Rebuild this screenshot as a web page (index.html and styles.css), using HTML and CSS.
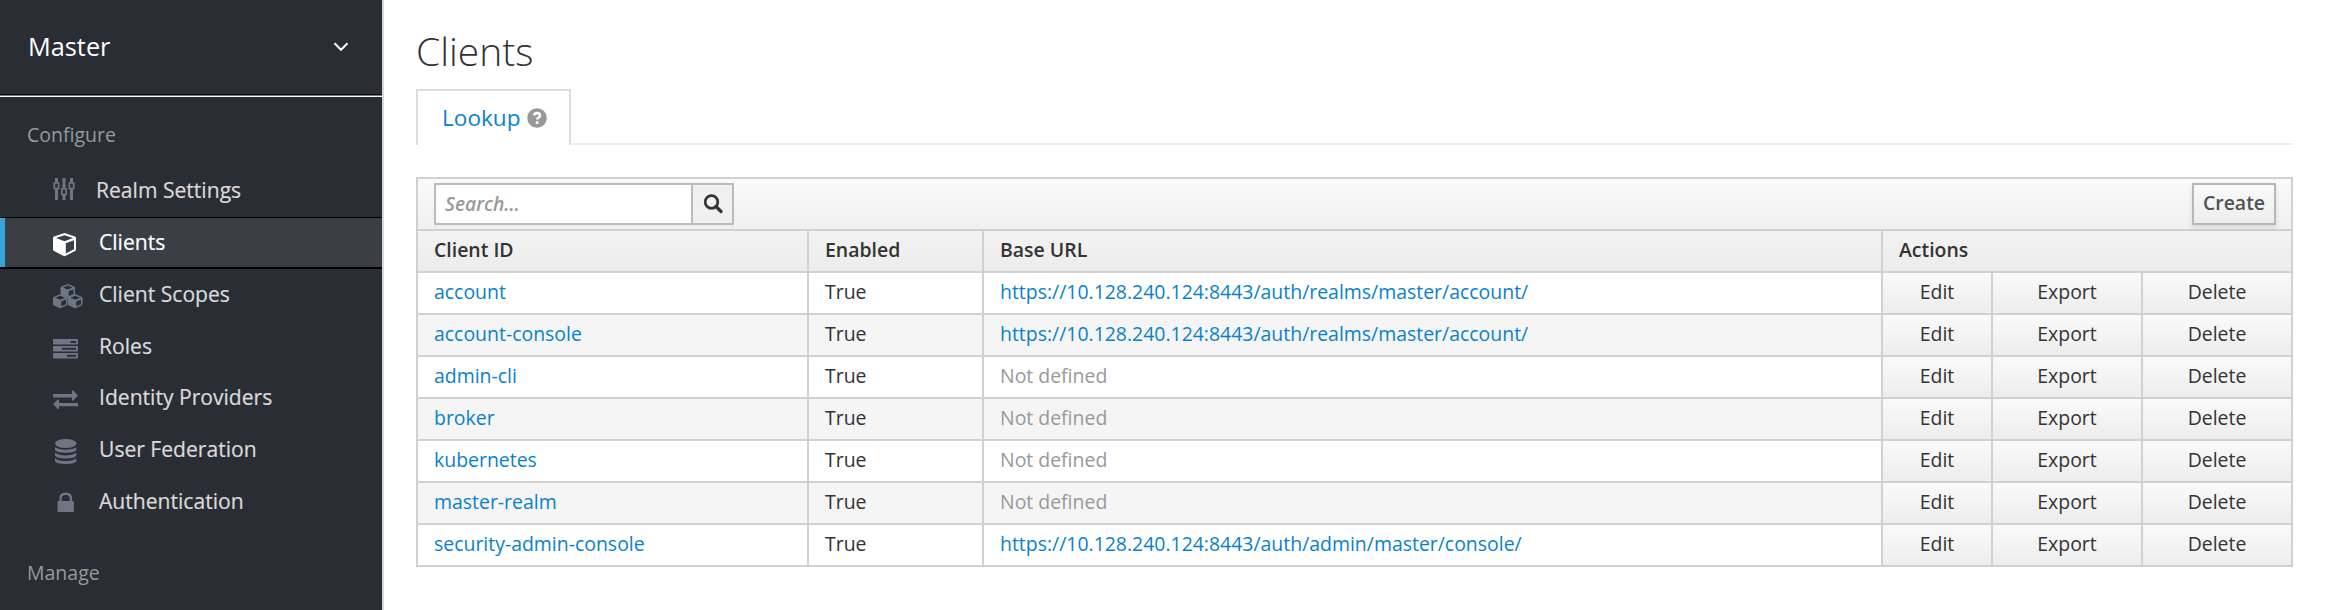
FILE: index.html
```html
<!DOCTYPE html>
<html lang="en">
<head>
<meta charset="utf-8">
<title>Clients</title>
<link rel="stylesheet" href="styles.css">
</head>
<body>
<div class="app">
  <nav class="sidebar">
    <div class="realm"><span>Master</span>
      <svg class="chevron" width="16" height="10" viewBox="0 0 16 10"><path d="M1.500 1.200 8 7.800l6.500-6.600" fill="none" stroke="#fff" stroke-width="2"/></svg>
    </div>
    <h2 class="group">Configure</h2>
    <ul class="menu">
      <li class="item first"><svg class="icon" width="31" height="24" viewBox="0 0 31 24"><g fill="none" stroke="currentColor" stroke-width="3"><path d="M3.500 0v5M3.500 11v11M11 0v11M11 17v5M18.500 0v5M18.500 11v11"/><path stroke-width="1.700" d="M1.300 5h4.400v5.500H1.300zM8.800 11h4.400v5.500H8.800zM16.300 5h4.400v5.500h-4.400z"/></g></svg><span>Realm Settings</span></li>
      <li class="item active"><svg class="icon" width="31" height="24" viewBox="0 0 31 24"><path fill="currentColor" fill-rule="evenodd" d="M11.500 0 22 3.500q1 .4 1 1.500v11.500q0 1-1 1.600l-9.800 5q-.7.300-1.400 0L1 18.100q-1-.6-1-1.600V5q0-1.100 1-1.500ZM11.500 2.300 3 5.100l8.500 3.100L20 5.100ZM21 7.300l-8.200 3v10.200L21 16.300Z"/></svg><span>Clients</span></li>
      <li class="item"><svg class="icon" width="31" height="25" viewBox="0 0 31 25"><defs><path id="cube" fill="currentColor" fill-rule="evenodd" d="M7.300 0l6.200 2.500q1 .4 1 1.400v6q0 .9-.9 1.400l-5.700 2.500q-.7.300-1.300 0L.9 11.300Q0 10.800 0 9.900v-6q0-1 1-1.400ZM7.300 1.500 2.500 3.600l4.800 2 4.800-2ZM13 5.200 8.200 7.200v4.900L13 10Z"/></defs><use href="#cube" x="7.500" y="0"/><use href="#cube" x="0" y="10.200"/><use href="#cube" x="15" y="10.200"/></svg><span>Client Scopes</span></li>
      <li class="item"><svg class="icon" width="31" height="24" viewBox="0 0 31 24"><path fill="currentColor" fill-rule="evenodd" d="M1 2h23q1 0 1 1v3.500q0 1-1 1H1q-1 0-1-1V3q0-1 1-1ZM17.500 4v2H23V4ZM1 9h23q1 0 1 1v3.500q0 1-1 1H1q-1 0-1-1V10q0-1 1-1ZM9 10.800v2h14v-2ZM1 16h23q1 0 1 1v3.500q0 1-1 1H1q-1 0-1-1V17q0-1 1-1ZM14 17.800v2h9v-2Z"/></svg><span>Roles</span></li>
      <li class="item"><svg class="icon" width="31" height="24" viewBox="0 0 31 24"><path fill="currentColor" d="M0 6h19V2.500h1.200L25 7.500l-4.800 5H19V9.500H0ZM25 15H6v-3.500H4.800L0 16.300l4.800 4.700H6v-2.700h19Z"/></svg><span>Identity Providers</span></li>
      <li class="item"><svg class="icon" width="31" height="26" viewBox="0 0 31 26"><g fill="currentColor"><ellipse cx="12.700" cy="4.500" rx="10.700" ry="4.500"/><path id="disk" d="M2 8q3 2.800 10.700 2.800T23.400 8v2.800Q22.400 13.800 12.700 13.800T2 10.800Z"/><use href="#disk" y="5.600"/><use href="#disk" y="11.200"/></g></svg><span>User Federation</span></li>
      <li class="item"><svg class="icon" width="31" height="24" viewBox="0 0 31 24"><rect x="4.500" y="9" width="16.400" height="11" rx="1" fill="currentColor"/><path d="M7.500 9.500v-3q0-4.800 5.200-4.800t5.200 4.800v3" fill="none" stroke="currentColor" stroke-width="2.400"/></svg><span>Authentication</span></li>
    </ul>
    <h2 class="group manage">Manage</h2>
  </nav>
  <main class="content">
    <h1 class="title">Clients</h1>
    <div class="tabs"><div class="tab"><a>Lookup</a><svg width="20" height="20" viewBox="0 0 20 20"><circle cx="10" cy="10" r="9.800" fill="#999"/><path d="M6.800 7.200Q7.800 4.900 10.100 4.900q2.900.1 2.900 2.500 0 1.300-1.400 2.100-1.400.7-1.400 2" fill="none" stroke="#fff" stroke-width="2.500"/><path d="M8.800 13.300h2.600v2.600H8.800z" fill="#fff"/></svg></div></div>
    <table class="clients">
      <colgroup><col class="c-id"><col class="c-on"><col class="c-url"><col class="c-edit"><col class="c-exp"><col class="c-del"></colgroup>
      <thead>
        <tr class="toolbar"><th colspan="6"><div class="bar"><div class="search"><div class="field">Search...</div><div class="go"><svg width="20" height="20" viewBox="0 0 20 20"><circle cx="8.500" cy="8" r="6.300" fill="none" stroke="#333" stroke-width="2.700"/><path d="m13 12.500 5 5" stroke="#333" stroke-width="3.200" stroke-linecap="round"/></svg></div></div><div class="create">Create</div></div></th></tr>
        <tr class="head"><th>Client ID</th><th>Enabled</th><th>Base URL</th><th colspan="3">Actions</th></tr>
      </thead>
      <tbody>
        <tr><td><a>account</a></td><td>True</td><td><a>https://10.128.240.124:8443/auth/realms/master/account/</a></td><td class="act">Edit</td><td class="act">Export</td><td class="act">Delete</td></tr>
        <tr><td><a>account-console</a></td><td>True</td><td><a>https://10.128.240.124:8443/auth/realms/master/account/</a></td><td class="act">Edit</td><td class="act">Export</td><td class="act">Delete</td></tr>
        <tr><td><a>admin-cli</a></td><td>True</td><td class="none">Not defined</td><td class="act">Edit</td><td class="act">Export</td><td class="act">Delete</td></tr>
        <tr><td><a>broker</a></td><td>True</td><td class="none">Not defined</td><td class="act">Edit</td><td class="act">Export</td><td class="act">Delete</td></tr>
        <tr><td><a>kubernetes</a></td><td>True</td><td class="none">Not defined</td><td class="act">Edit</td><td class="act">Export</td><td class="act">Delete</td></tr>
        <tr><td><a>master-realm</a></td><td>True</td><td class="none">Not defined</td><td class="act">Edit</td><td class="act">Export</td><td class="act">Delete</td></tr>
        <tr><td><a>security-admin-console</a></td><td>True</td><td><a>https://10.128.240.124:8443/auth/admin/master/console/</a></td><td class="act">Edit</td><td class="act">Export</td><td class="act">Delete</td></tr>
      </tbody>
    </table>
  </main>
</div>
</body>
</html>
```
FILE: styles.css
```css
* { box-sizing: border-box; }
body { margin: 0; background: #fff; font: 19.440px/26px "Open Sans", sans-serif; color: #333; }
.app { display: flex; height: 610px; overflow: hidden; }
.sidebar { width: 384px; flex: none; background: #292e34; border-right: 2px solid #d8d8d8; }
.realm { height: 97px; display: flex; align-items: center; justify-content: space-between; padding: 0 33px 4px 28px; border-bottom: 1px solid #fff; box-shadow: inset 0 -1px #777, inset 0 -2px #0c0e10; color: #fff; font-size: 25.300px; }
.chevron { position: relative; top: 1px; }
.group { margin: 0; padding: 25px 0 0 27px; height: 68px; font-size: 19.500px; font-weight: 400; color: #999; }
.menu { margin: 0; padding: 0; list-style: none; }
.item { height: 51.75px; display: flex; align-items: center; padding: 0 0 1px 53px; gap: 15px; color: #6f7683; font-size: 21.100px; }
.item span { color: #dbdada; -webkit-text-stroke: .2px; }
.item .icon { position: relative; top: 3px; }
.first { gap: 12px; }
.item.first .icon { top: 0; }
.active { background: #393f44; border-top: 1px solid #000; border-bottom: 2px solid #000; color: #fff; box-shadow: inset 5px 0 #39a5dc; padding-bottom: 0; }
.item.active span { color: #fff; }
.manage { padding-top: 33px; }
.content { width: 1877px; margin-left: 32px; }
.title { margin: 0; padding-top: 26px; height: 89px; font-size: 39px; line-height: 50px; font-weight: 300; }
.tabs { height: 56px; border-bottom: 2px solid #ececec; display: flex; }
.tab { width: 155px; height: 56px; background: #fff; border: 2px solid #ddd; border-bottom: 0; display: flex; align-items: center; padding: 0 0 1px 24px; gap: 6px; font-size: 22.600px; }
a { color: #0a82cb; }
.clients { margin-top: 32px; width: 1877px; table-layout: fixed; border-collapse: collapse; }
.c-id { width: 391px; } .c-on { width: 175px; } .c-url { width: 899px; } .c-edit { width: 110px; } .c-exp { width: 150px; }
th, td { height: 42px; padding: 0 0 2px 16px; border: 2px solid #d1d1d1; text-align: left; }
th { font-weight: 600; }
.toolbar th { height: 52px; padding: 0 15px 0 16px; background: linear-gradient(#fafafa, #f0f0f0); }
.bar { display: flex; justify-content: space-between; align-items: center; }
.search { display: flex; width: 300px; height: 42px; border: 2px solid #bbb; background: #fff; }
.field { flex: 1; padding: 6px 9px; font-size: 19.200px; font-style: italic; font-weight: 600; color: #999; }
.go { width: 41px; border-left: 2px solid #bbb; background: #f0f0f0; display: flex; align-items: center; justify-content: center; }
.create { width: 84px; height: 42px; border: 2px solid #b7b7b7; background: linear-gradient(#fafafa, #ededed); text-align: center; line-height: 36px; color: #4d5258; box-shadow: 0 3px 5px rgba(3, 3, 3, .1); }
.head { background: linear-gradient(#f3f3f3, #ececec); }
tbody tr:nth-child(even) { background: #f5f5f5; }
.none { color: #999; }
.act { padding-left: 0; text-align: center; background: linear-gradient(#fafafa, #ededed); }
```
